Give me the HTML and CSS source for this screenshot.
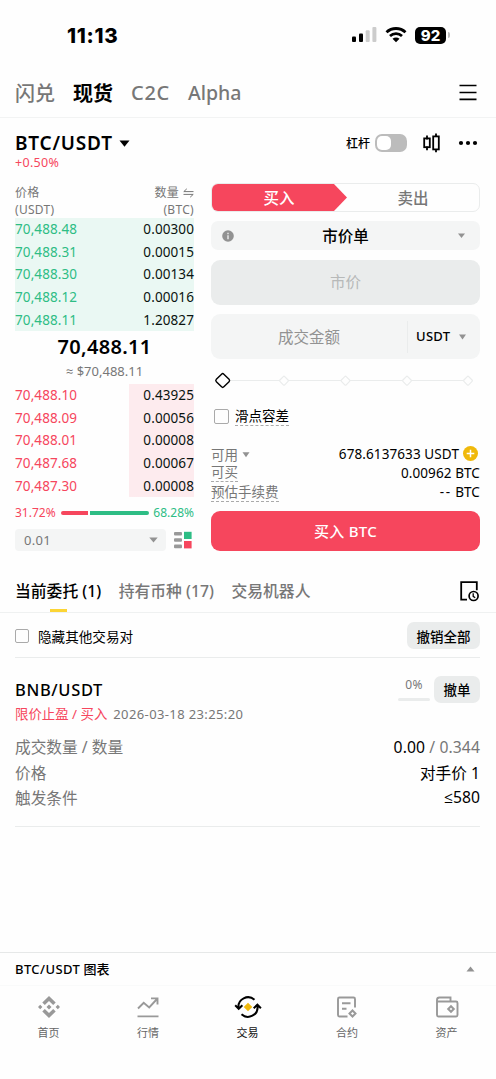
FILE: index.html
```html
<!DOCTYPE html>
<html lang="zh-CN">
  <head>
    <meta charset="UTF-8" />
    <meta name="viewport" content="width=device-width, initial-scale=1.0" />
    <title>BTC/USDT 现货</title>
    <link rel="stylesheet" href="styles.css">
  </head>
  <body>
    <!-- Status bar -->
    <div class="status-bar">
      <span class="time">11:13</span>
      <div class="status-icons">
        <svg width="25" height="16" viewBox="0 0 25 16">
          <rect x="0" y="9.5" width="4" height="5.5" rx="1" fill="#000" />
          <rect x="7" y="6.5" width="4" height="8.5" rx="1" fill="#000" />
          <rect x="13.7" y="3.2" width="4" height="11.8" rx="1" fill="#ccc" />
          <rect x="20.4" y="0" width="4" height="15" rx="1" fill="#ccc" />
        </svg>
        <svg width="22" height="16" viewBox="0 0 22 16">
          <path d="M1.5 5.3C6.8 .2 15.2 .2 20.5 5.3M5 9C8.4 5.9 13.6 5.9 17 9" fill="none" stroke="#000" stroke-width="2.8" />
          <path d="M7.5 11.7C9.5 10 12.5 10 14.5 11.7L11 15.3z" fill="#000" />
        </svg>
        <div class="battery">92</div>
        <span class="battery-cap"></span>
      </div>
    </div>

    <!-- Top navigation -->
    <div class="top-nav">
      <span class="nav-cjk">闪兑</span>
      <span class="nav-cjk nav-active">现货</span>
      <span class="nav-c2c">C2C</span>
      <span class="nav-alpha">Alpha</span>
      <svg class="menu-icon" width="18" height="17" viewBox="0 0 18 17">
        <path d="M0.5 1.5h17M0.5 8.5h17M0.5 15.3h17" stroke="#000" stroke-width="1.7" />
      </svg>
    </div>

    <!-- Trading pair -->
    <div class="pair-header">
      <div class="pair-info">
        <div class="pair-name">
          <span>BTC/USDT</span>
          <svg width="11" height="7" viewBox="0 0 11 7"><path d="M.5 .5h10L5.5 6.7z" fill="#000" /></svg>
        </div>
        <div class="pair-change">+0.50%</div>
      </div>
      <div class="pair-tools">
        <span class="lever">杠杆</span>
        <span class="toggle"></span>
        <svg class="candle" width="19" height="20" viewBox="0 0 19 20">
          <path d="M5 2.5v4M5 13.5v3.7M14 .5v3M14 16.3v3" stroke="#000" stroke-width="1.8" />
          <rect x="2.2" y="5.4" width="5.6" height="8.8" fill="none" stroke="#000" stroke-width="1.8" />
          <rect x="11.2" y="3.4" width="5.6" height="13" fill="none" stroke="#000" stroke-width="1.8" />
        </svg>
        <svg width="20" height="6" viewBox="0 0 20 6">
          <circle cx="3" cy="3" r="2.1" /><circle cx="10" cy="3" r="2.1" /><circle cx="17" cy="3" r="2.1" />
        </svg>
      </div>
    </div>

    <div class="trade">
      <!-- Order book -->
      <div class="book">
        <div class="book-head">
          <div>价格<br>(USDT)</div>
          <div class="right">
            <span class="swap-label">数量
              <svg width="11" height="10" viewBox="0 0 11 10"><path d="M10.500 3.600H.8L3.800 .8M.5 6.400h9.700L7.200 9.200" fill="none" stroke="#777" /></svg>
            </span><br>(BTC)
          </div>
        </div>
        <div class="asks">
          <div class="book-row"><span>70,488.48</span><b>0.00300</b></div>
          <div class="book-row"><span>70,488.31</span><b>0.00015</b></div>
          <div class="book-row"><span>70,488.30</span><b>0.00134</b></div>
          <div class="book-row"><span>70,488.12</span><b>0.00016</b></div>
          <div class="book-row"><span>70,488.11</span><b>1.20827</b></div>
        </div>
        <div class="last-price">70,488.11</div>
        <div class="last-usd"><span class="approx">≈</span> $70,488.11</div>
        <div class="bids">
          <div class="book-row"><span>70,488.10</span><b>0.43925</b></div>
          <div class="book-row"><span>70,488.09</span><b>0.00056</b></div>
          <div class="book-row"><span>70,488.01</span><b>0.00008</b></div>
          <div class="book-row"><span>70,487.68</span><b>0.00067</b></div>
          <div class="book-row"><span>70,487.30</span><b>0.00008</b></div>
        </div>
        <div class="ratio">
          <span class="red">31.72%</span>
          <span class="ratio-bar"><i style="width: 31.72%"></i><i></i></span>
          <span class="green">68.28%</span>
        </div>
        <div class="depth">
          <div class="depth-select">0.01<svg width="9" height="6" viewBox="0 0 9 6"><path d="M.3 .5h8.4L4.5 5.5z" fill="#929292" /></svg></div>
          <svg width="18" height="18" viewBox="0 0 18 18">
            <rect x="0" y="1" width="8" height="3.6" rx="1" fill="#999" />
            <rect x="0" y="7.2" width="8" height="3.6" rx="1" fill="#999" />
            <rect x="0" y="13.6" width="8" height="3.6" rx="1" fill="#999" />
            <rect x="10" y="0.8" width="7.6" height="7.2" fill="#2ebd85" />
            <rect x="10" y="10" width="7.6" height="7.4" fill="#f6465d" />
          </svg>
        </div>
      </div>

      <!-- Order form -->
      <div class="form">
        <div class="side-switch">
          <div class="side-buy">买入</div>
          <div class="side-sell">卖出</div>
        </div>
        <div class="order-type">
          <svg width="12" height="12" viewBox="0 0 12 12"><circle cx="6" cy="6" r="5.8" fill="#929292" /><path d="M6 2.7v1.6M6 5.2v4" stroke="#f4f5f5" stroke-width="1.3" /></svg>
          <span>市价单</span>
          <svg width="9" height="6" viewBox="0 0 9 6"><path d="M1 .5h7L4.5 5z" fill="#929292" /></svg>
        </div>
        <div class="price-input">市价</div>
        <div class="amount-input">
          <span class="amount-label">成交金额</span>
          <span class="amount-unit">USDT</span>
          <svg width="9" height="6" viewBox="0 0 9 6"><path d="M1 .5h7L4.5 5.5z" fill="#929292" /></svg>
        </div>
        <svg class="slider" width="269" height="20" viewBox="0 0 269 20">
          <path d="M20 9.500h236" stroke="#eaecec" />
          <g fill="#fefefe" stroke="#eaecec" stroke-width="1.2">
            <rect x="-3.4" y="-3.4" width="6.8" height="6.8" rx="1" transform="translate(73 9.7) rotate(45)" />
            <rect x="-3.4" y="-3.4" width="6.8" height="6.8" rx="1" transform="translate(134.5 9.7) rotate(45)" />
            <rect x="-3.4" y="-3.4" width="6.8" height="6.8" rx="1" transform="translate(196 9.7) rotate(45)" />
            <rect x="-3.4" y="-3.4" width="6.8" height="6.8" rx="1" transform="translate(257 9.7) rotate(45)" />
          </g>
          <rect x="-5.3" y="-5.3" width="10.6" height="10.6" rx="1.6" fill="#fefefe" stroke="#000" stroke-width="1.4" transform="translate(11.7 9.5) rotate(45)" />
        </svg>
        <div class="slippage"><i class="checkbox"></i><span class="dotted">滑点容差</span></div>
        <div class="info-row">
          <span>可用 <svg width="8" height="6" viewBox="0 0 8 6"><path d="M.5 .3h7L4 5.3z" fill="#929292" /></svg></span>
          <b class="balance">678.6137633 USDT
            <svg width="15" height="15" viewBox="0 0 15 15"><circle cx="7.5" cy="7.5" r="7.5" fill="#f0b90b" /><path d="M3.7 7.5h7.6M7.5 3.7v7.6" stroke="#fff" stroke-width="1.5" /></svg>
          </b>
        </div>
        <div class="info-row"><span class="dotted">可买</span><b>0.00962 BTC</b></div>
        <div class="info-row"><span class="dotted">预估手续费</span><b><span class="dashes">--</span> BTC</b></div>
        <button class="buy-button">买入 BTC</button>
      </div>
    </div>

    <!-- Orders -->
    <div class="order-tabs">
      <span class="tab tab-active">当前委托 (1)</span>
      <span class="tab">持有币种 (17)</span>
      <span class="tab">交易机器人</span>
      <svg class="history" width="19" height="21" viewBox="0 0 19 21">
        <path d="M7 18.7H1.2V1.2h15.6v8" fill="none" stroke="#000" stroke-width="1.8" />
        <circle cx="13.6" cy="15" r="4.5" fill="none" stroke="#000" stroke-width="1.7" />
        <path d="M13.2 12.3v3l2 1.4" fill="none" stroke="#000" stroke-width="1.3" />
      </svg>
    </div>

    <div class="orders">
      <div class="filter-row">
        <i class="checkbox"></i>
        <span>隐藏其他交易对</span>
        <button class="gray-button cancel-all">撤销全部</button>
      </div>
      <div class="order-card">
        <div class="order-head">
          <span class="order-pair">BNB/USDT</span>
          <div class="progress">0%<i></i></div>
          <button class="gray-button cancel">撤单</button>
        </div>
        <div class="order-meta"><span class="red">限价止盈 / 买入</span><span class="date">2026-03-18 23:25:20</span></div>
        <div class="order-row"><span>成交数量 / 数量</span><span class="filled"><b>0.00</b> / 0.344</span></div>
        <div class="order-row"><span>价格</span><b>对手价 1</b></div>
        <div class="order-row"><span>触发条件</span><b class="trigger"><span class="lte">≤</span>580</b></div>
      </div>
    </div>

    <!-- Bottom -->
    <div class="chart-bar">
      <span><span class="chart-pair">BTC/USDT</span> 图表</span>
      <svg width="9" height="6" viewBox="0 0 9 6"><path d="M.5 5.5h8L4.5 .5z" fill="#929292" /></svg>
    </div>
    <div class="bottom-nav">
      <div class="nav-item">
        <svg width="24" height="24" viewBox="0 0 24 24" fill="#999">
          <path d="M12 1l6.7 6.6-2.5 2.5L12 5.9l-4.2 4.2-2.5-2.5zM12 23l6.7-6.6-2.5-2.5L12 18.1l-4.2-4.2-2.5 2.5zM12 9.5l2.5 2.5-2.5 2.5L9.5 12zM3.2 9.8L5.4 12l-2.2 2.2L1 12zM20.8 9.8L23 12l-2.2 2.2L18.6 12z" />
        </svg>
        首页
      </div>
      <div class="nav-item">
        <svg width="24" height="24" viewBox="0 0 24 24" fill="none" stroke="#999" stroke-width="1.9">
          <path d="M2 13.5l5.700-5.700 5.500 4.700L21 4M15 3.4h6.5v6M1.5 21.4h21" />
        </svg>
        行情
      </div>
      <div class="nav-item nav-current">
        <svg width="28" height="24" viewBox="0 0 28 24" fill="none" stroke="#000" stroke-width="2">
          <path d="M20.5 4.8A9.6 9.6 0 0 0 4.5 13M1.2 10.3l3.5 3.5 3.7-3.5M7.5 19.3A9.6 9.6 0 0 0 23.5 11M19.7 13.3l3.7-3.6 3.5 3.6" />
          <path d="M14 7.7l4.3 4.3-4.3 4.3L9.7 12z" fill="#f0b90b" stroke="none" />
        </svg>
        交易
      </div>
      <div class="nav-item">
        <svg width="24" height="24" viewBox="0 0 24 24" fill="none" stroke="#999" stroke-width="1.9">
          <path d="M12.5 21.5h-8q-1.500 0-1.500-1.500V4q0-1.500 1.500-1.500H18.500q1.500 0 1.500 1.500V12.500M7 8.300h8.500M7 13.700h4.500" />
          <path d="M17.500 15.500l3 3-3 3-3-3z" stroke-width="2" />
        </svg>
        合约
      </div>
      <div class="nav-item">
        <svg width="24" height="24" viewBox="0 0 24 24" fill="none" stroke="#999" stroke-width="1.9">
          <path d="M2 6.5V5q0-2.500 2.500-2.500h11v4M2 6.500h19q1.500 0 1.500 1.500v12q0 1.500-1.500 1.500H3.500Q2 21.500 2 20z" />
          <path d="M16 11.200l2.800 2.800-2.800 2.800-2.800-2.800z" stroke-width="2" />
        </svg>
        资产
      </div>
    </div>
  </body>
</html>
```

FILE: styles.css
```css
* {
  box-sizing: border-box;
}

body {
  font-family: "Noto Sans", "Noto Sans CJK SC", sans-serif;
  background-color: #fefefe;
  color: #000;
  margin: 0;
  width: 496px;
  height: 1079px;
  display: flex;
  flex-direction: column;
  overflow: hidden;
  white-space: nowrap;
}

svg {
  display: block;
  flex: none;
}

b,
i {
  font-weight: normal;
  font-style: normal;
}

button {
  font-family: inherit;
  border: none;
  padding: 0;
}

.red {
  color: #f6465d;
}

.green {
  color: #2ebd85;
}

/* status bar */
.status-bar {
  height: 68px;
  padding: 2px 46px 0 67px;
  display: flex;
  align-items: center;
  justify-content: space-between;
}

.time {
  font-family: "Inter", sans-serif;
  font-size: 20.5px;
  font-weight: 800;
  letter-spacing: 0.7px;
}

.status-icons {
  display: flex;
  align-items: center;
}

.status-icons svg {
  margin-right: 8px;
}

.battery {
  width: 31px;
  height: 17px;
  border-radius: 5px;
  background-color: #000;
  color: #fff;
  font-family: "Inter", sans-serif;
  font-size: 15px;
  font-weight: 800;
  line-height: 17px;
  text-align: center;
}

.battery-cap {
  width: 2px;
  height: 6px;
  margin-left: 2px;
  border-radius: 0 2px 2px 0;
  background-color: #bbb;
}

/* top nav */
.top-nav {
  height: 50px;
  padding: 0 19px 0 15px;
  border-bottom: 1px solid #f2f3f3;
  display: flex;
  align-items: center;
  gap: 18px;
  color: #777;
  font-size: 20px;
  font-weight: 500;
}

.nav-active {
  color: #000;
  font-weight: 700;
}

.nav-c2c {
  letter-spacing: 0.7px;
}

.nav-alpha {
  font-size: 19.5px;
}

.menu-icon {
  margin-left: auto;
}

/* pair */
.pair-header {
  height: 65px;
  padding: 14px 18px 0 15px;
  display: flex;
  justify-content: space-between;
}

.pair-name {
  height: 22px;
  display: flex;
  align-items: center;
  gap: 6px;
  font-size: 19px;
  font-weight: 600;
  letter-spacing: 0.8px;
}

.pair-change {
  height: 17px;
  line-height: 17px;
  color: #f6465d;
  font-size: 12.5px;
  letter-spacing: 0.3px;
}

.pair-tools {
  height: 22px;
  display: flex;
  align-items: center;
}

.lever {
  font-size: 12px;
  font-weight: 500;
}

.toggle {
  width: 32px;
  height: 18px;
  margin: 0 15px 0 5px;
  padding: 2px;
  border-radius: 7px;
  background-color: #bcbcbc;
}

.toggle::before {
  content: "";
  display: block;
  width: 14px;
  height: 14px;
  border-radius: 5px;
  background-color: #fff;
}

.candle {
  margin-right: 17px;
}

/* order book */
.trade {
  height: 385px;
  padding: 0 16px 0 15px;
  display: flex;
  gap: 17px;
}

.book {
  width: 179px;
}

.book-head {
  height: 35px;
  padding-top: 1px;
  display: flex;
  justify-content: space-between;
  color: #777;
  font-size: 12px;
  letter-spacing: 0.3px;
  line-height: 17px;
}

.right {
  text-align: right;
}

.swap-label {
  display: inline-flex;
  align-items: center;
  gap: 4px;
}

.asks {
  color: #2ebd85;
  background-color: #eaf8f3;
}

.bids {
  color: #f6465d;
  background: linear-gradient(#fdebee, #fdebee) right / 65px 100% no-repeat;
}

.book-row {
  height: 22.6px;
  display: flex;
  align-items: center;
  justify-content: space-between;
  font-size: 13.5px;
  letter-spacing: 0.1px;
}

.book-row b {
  color: #0a1410;
}

.last-price {
  height: 32px;
  line-height: 32px;
  text-align: center;
  font-size: 20px;
  font-weight: 600;
  letter-spacing: 0.3px;
}

.last-usd {
  height: 21px;
  line-height: 16px;
  text-align: center;
  color: #777;
  font-size: 13px;
}

.approx {
  font-family: "Open Sans", "Liberation Sans", sans-serif;
}

.ratio {
  height: 32px;
  display: flex;
  align-items: center;
  justify-content: space-between;
  font-size: 12px;
}

.ratio-bar {
  display: flex;
  gap: 2px;
  width: 88px;
}

.ratio-bar i {
  height: 4px;
  border-radius: 2px 0 0 2px;
  background-color: #f6465d;
}

.ratio-bar i:last-child {
  flex: 1;
  border-radius: 0 2px 2px 0;
  background-color: #2ebd85;
}

.depth {
  display: flex;
  align-items: center;
  gap: 8px;
}

.depth-select {
  width: 151px;
  height: 22px;
  padding: 0 8px 0 9px;
  border-radius: 4px;
  background-color: #f4f5f5;
  color: #777;
  font-size: 13px;
  letter-spacing: 0.3px;
  display: flex;
  align-items: center;
  justify-content: space-between;
}

/* order form */
.form {
  width: 269px;
}

.side-switch {
  height: 29px;
  border: 1px solid #eaecec;
  border-radius: 7px;
  display: flex;
  overflow: hidden;
  font-size: 15.5px;
  font-weight: 500;
}

.side-switch div {
  flex: 1;
  line-height: 28px;
  text-align: center;
}

.side-switch .side-buy {
  flex: none;
  width: 136px;
  margin: -1px 0 -1px -1px;
  line-height: 30px;
  background-color: #f6465d;
  color: #fff;
  clip-path: polygon(0 0, 122px 0, 100% 50%, 122px 100%, 0 100%);
}

.side-sell {
  color: #777;
}

.order-type {
  height: 29px;
  margin-top: 9px;
  padding: 0 14px 0 11px;
  border-radius: 7px;
  background-color: #f4f5f5;
  display: flex;
  align-items: center;
  justify-content: space-between;
  font-size: 15.5px;
  font-weight: 500;
}

.price-input {
  height: 45px;
  margin-top: 10px;
  border-radius: 9px;
  background-color: #eaecec;
  color: #b7b9b9;
  font-size: 15.5px;
  line-height: 45px;
  text-align: center;
}

.amount-input {
  height: 45px;
  margin: 9px 0 12px;
  padding-right: 13px;
  border-radius: 9px;
  background-color: #f4f5f5;
  display: flex;
  align-items: center;
}

.amount-label {
  width: 196px;
  color: #929292;
  font-size: 15.5px;
  text-align: center;
}

.amount-unit {
  flex: 1;
  height: 32px;
  padding-left: 8px;
  border-left: 1px solid #eaecec;
  font-size: 13px;
  font-weight: 500;
  letter-spacing: 0.3px;
  line-height: 31px;
}

.slippage {
  height: 53px;
  padding: 16px 0 0 3px;
  display: flex;
  align-items: flex-start;
  gap: 6px;
  font-size: 13.5px;
  line-height: 19px;
}

.checkbox {
  width: 15px;
  height: 15px;
  margin-top: 2px;
  border: 1px solid #aaa;
  border-radius: 2px;
}

.dotted {
  height: 19px;
  border-bottom: 1px dashed #aaa;
  line-height: 18px;
}

.info-row {
  height: 19.3px;
  display: flex;
  align-items: center;
  justify-content: space-between;
  font-size: 13.5px;
}

.info-row > span {
  color: #777;
}

.info-row b {
  letter-spacing: 0.1px;
}

.info-row svg {
  display: inline-block;
  vertical-align: 2px;
}

.dashes {
  letter-spacing: 1.5px;
}

.balance {
  margin-right: 2px;
  display: flex;
  align-items: center;
  gap: 4px;
}

.buy-button {
  width: 269px;
  height: 40px;
  margin-top: 9px;
  border-radius: 9px;
  background-color: #f6465d;
  color: #fff;
  font-size: 15px;
  font-weight: 500;
  letter-spacing: 0.3px;
}

/* order tabs */
.order-tabs {
  height: 45px;
  padding: 0 17px 0 15px;
  border-bottom: 1px solid #eff1f1;
  display: flex;
  gap: 17.5px;
  color: #777;
  font-size: 15.8px;
  line-height: 47px;
  font-weight: 500;
}

.tab-active {
  color: #000;
  background: linear-gradient(#fcd535, #fcd535) center bottom / 17px 3px no-repeat;
}

.history {
  margin: 13px 0 0 auto;
}

/* order list */
.orders {
  padding: 0 16px 0 15px;
}

.filter-row {
  height: 45px;
  padding-top: 1px;
  border-bottom: 1px solid #eaecec;
  display: flex;
  align-items: center;
  gap: 9px;
  font-size: 13.6px;
}

.filter-row .checkbox {
  width: 14px;
  height: 14px;
  margin: 0;
}

.gray-button {
  height: 27px;
  border-radius: 7px;
  background-color: #eaecec;
  font-size: 13.5px;
  font-weight: 500;
}

.cancel-all {
  width: 73px;
  margin-left: auto;
}

.cancel {
  width: 46px;
  padding-bottom: 2px;
}

.order-card {
  height: 169px;
  padding-top: 18px;
  border-bottom: 1px solid #eaecec;
}

.order-head {
  height: 27px;
  display: flex;
  align-items: center;
}

.order-pair {
  font-size: 16.5px;
  font-weight: 500;
  letter-spacing: 0.65px;
}

.progress {
  width: 32px;
  margin: -3px 4px 0 auto;
  color: #777;
  font-size: 12px;
  letter-spacing: 0.3px;
  line-height: 17px;
  text-align: center;
}

.progress i {
  display: block;
  height: 3px;
  margin-top: 5px;
  border-radius: 2px;
  background-color: #eaecec;
}

.order-meta {
  height: 31px;
  line-height: 23px;
  font-size: 13.4px;
}

.date {
  margin-left: 6px;
  color: #777;
  font-size: 13px;
  letter-spacing: 0.38px;
}

.order-row {
  height: 25.4px;
  display: flex;
  align-items: center;
  justify-content: space-between;
  color: #777;
  font-size: 15.7px;
}

.order-row b {
  color: #000;
}

.filled {
  letter-spacing: 0.1px;
}

.lte {
  font-family: "Open Sans", "Liberation Sans", sans-serif;
}

/* bottom */
.chart-bar {
  height: 34px;
  margin-top: auto;
  padding: 0 21px 1px 15px;
  border-top: 1px solid #e6e8e8;
  border-bottom: 1px solid #f9fafa;
  display: flex;
  align-items: center;
  justify-content: space-between;
  font-size: 13px;
  font-weight: 500;
}

.chart-pair {
  letter-spacing: 0.4px;
}

.bottom-nav {
  height: 93px;
  padding: 9px 1px 0 0;
  display: flex;
  justify-content: space-between;
}

.nav-item {
  width: 97px;
  display: flex;
  flex-direction: column;
  align-items: center;
  gap: 6px;
  color: #666;
  font-size: 11px;
  line-height: 16px;
}

.nav-current {
  color: #111;
}
```
